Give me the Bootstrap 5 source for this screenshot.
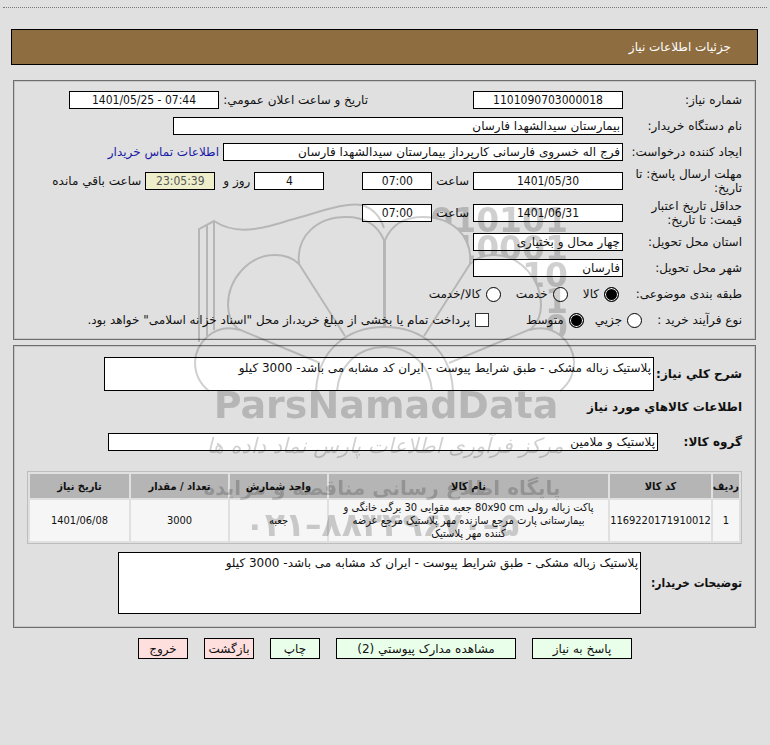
<!DOCTYPE html>
<html lang="fa" dir="rtl">
<head>
<meta charset="utf-8">
<meta name="viewport" content="width=device-width, initial-scale=1">
<title>جزئیات اطلاعات نیاز</title>
<link rel="stylesheet" href="https://cdn.jsdelivr.net/npm/bootstrap@5.3.0/dist/css/bootstrap.min.css">
<style>
body{background:#e0e0e0;color:#111;font:12px/14px "DejaVu Sans",sans-serif}
.top-line{border-top:1px dotted #777;margin:7px 3px 21px}
.page-title{background:#8e6d41;border:1px solid #000;color:#fff;margin:0 12px 15px 11px;height:36px;padding:0 26px}
.panel{border:1px solid #6e6e6e;box-shadow:inset 0 0 0 1px #c6c6c6;margin:0 14px 5px 13px;padding:6px 13px}
.panel-goods{padding:11px 13px 13px}
.line{min-height:26px}
.line-tall{min-height:32px}
.caption-col{flex:0 0 115px}
.caption-wide{flex:0 0 84px;min-width:0;font-weight:700}
.caption-note{flex:0 0 97px;font-weight:700;font-family:"DejaVu Sans Condensed","DejaVu Sans",sans-serif}
.field{display:block;height:18px;border:1px solid #000;border-radius:0;background:#fff;color:#111;padding:0 2px;min-width:0;font-size:12px;line-height:16px;flex:0 1 auto}
.field[dir=ltr]{font-family:"DejaVu Sans Condensed","DejaVu Sans",sans-serif}
.area{height:auto;resize:none;overflow:hidden;padding:3px 2px 1px;line-height:14px}
.w-s{width:70px}.w-m{width:150px}.w-l{width:400px}.w-xl{width:450px}.w-xxl{width:550px}.w-note{width:523px}
.second{width:145px;margin-right:101px}
.days{margin-right:34px}
.left-time{background:#eeeecb;color:#555;margin-right:4px}
.contact{color:#1a1aa6;text-decoration:none}
.pick{appearance:none;width:15px;height:15px;border:1px solid #000;background:#fff;margin:0;flex:none}
.pick[type=radio]{border-radius:50%}
.pick[type=radio]:checked{background:#000;box-shadow:inset 0 0 0 1px #fff}
.pick[type=checkbox]{width:14px;height:14px;border-color:#333}
.choice{gap:5px}
.kinds{gap:15px}
.sizes{gap:11px}
.treasury{margin-right:26px}
.goods-title{font-size:12px;line-height:14px;font-weight:700;margin:9px 0 15px}
.goods{width:100%;table-layout:fixed;border:1px solid #bdbdbd;border-collapse:separate;border-spacing:2px;font:11px/13px "DejaVu Sans Condensed","DejaVu Sans",sans-serif;text-align:center}
.goods th{background:#b5b5b5;height:24px;padding:0;font-weight:700;white-space:nowrap}
.goods td{background:#f6f6f6;height:41px;padding:1px 0}
.goods .item-name{padding:1px 12px}
.col-row{width:26px}.col-code{width:101px}.col-unit{width:97px}.col-qty{width:97px}.col-date{width:99px}
.actions{margin-top:10px}
.act{border:1px solid #000;background:#eaffea;color:#111;height:21px;padding:0;font-size:12px;line-height:18px;white-space:nowrap}
.act-red{background:#ffdede}
.act-s{width:50px}.act-m{width:100px}.act-l{width:180px}
.watermark{position:absolute;top:200px;left:50%;width:400px;height:350px;margin-left:-200px;pointer-events:none;opacity:.18}
</style>
<script src="https://cdn.jsdelivr.net/npm/bootstrap@5.3.0/dist/js/bootstrap.bundle.min.js"></script>
</head>
<body>
<main class="position-relative overflow-hidden">
<div class="top-line"></div>
<header class="page-title d-flex align-items-center">جزئیات اطلاعات نیاز</header>

<form>
<section class="panel">
  <div class="line d-flex align-items-center gap-1">
    <label class="caption-col" for="no">شماره نیاز:</label>
    <input class="field w-m text-center" id="no" dir="ltr" value="1101090703000018" readonly>
    <label class="second text-nowrap" for="pub">تاریخ و ساعت اعلان عمومي:</label>
    <input class="field w-m text-center" id="pub" dir="ltr" value="1401/05/25 - 07:44" readonly>
  </div>
  <div class="line d-flex align-items-center gap-1">
    <label class="caption-col" for="org">نام دستگاه خریدار:</label>
    <input class="field w-xl" id="org" value="بیمارستان سیدالشهدا فارسان" readonly>
  </div>
  <div class="line d-flex align-items-center gap-1">
    <label class="caption-col text-nowrap" for="by">ایجاد کننده درخواست:</label>
    <input class="field w-l" id="by" value="فرج اله خسروی فارسانی کارپرداز بیمارستان سیدالشهدا فارسان" readonly>
    <a class="contact text-nowrap" href="#">اطلاعات تماس خریدار</a>
  </div>
  <div class="line line-tall d-flex align-items-center gap-1">
    <label class="caption-col" for="d1">مهلت ارسال پاسخ: تا تاریخ:</label>
    <input class="field w-m text-center" id="d1" dir="ltr" value="1401/05/30" readonly>
    <label for="t1">ساعت</label>
    <input class="field w-s text-center" id="t1" dir="ltr" value="07:00" readonly>
    <input class="field w-s text-center days" id="days" dir="ltr" value="4" readonly>
    <label class="text-nowrap" for="days">روز و</label>
    <input class="field w-s text-center left-time" id="left" dir="ltr" value="23:05:39" readonly>
    <label class="text-nowrap" for="left">ساعت باقي مانده</label>
  </div>
  <div class="line line-tall d-flex align-items-center gap-1">
    <label class="caption-col" for="d2">حداقل تاریخ اعتبار قیمت: تا تاریخ:</label>
    <input class="field w-m text-center" id="d2" dir="ltr" value="1401/06/31" readonly>
    <label for="t2">ساعت</label>
    <input class="field w-s text-center" id="t2" dir="ltr" value="07:00" readonly>
  </div>
  <div class="line d-flex align-items-center gap-1">
    <label class="caption-col" for="prov">استان محل تحویل:</label>
    <input class="field w-m" id="prov" value="چهار محال و بختیاری" readonly>
  </div>
  <div class="line d-flex align-items-center gap-1">
    <label class="caption-col" for="city">شهر محل تحویل:</label>
    <input class="field w-m" id="city" value="فارسان" readonly>
  </div>
  <div class="line d-flex align-items-center" role="radiogroup">
    <span class="caption-col">طبقه بندی موضوعی:</span>
    <div class="kinds d-flex pe-2">
      <label class="choice d-flex align-items-center"><input class="pick" type="radio" name="kind" checked>کالا</label>
      <label class="choice d-flex align-items-center"><input class="pick" type="radio" name="kind">خدمت</label>
      <label class="choice d-flex align-items-center"><input class="pick" type="radio" name="kind">کالا/خدمت</label>
    </div>
  </div>
  <div class="line d-flex align-items-center sizes" role="radiogroup">
    <span class="text-nowrap ps-1">نوع فرآیند خرید :</span>
    <label class="choice d-flex align-items-center"><input class="pick" type="radio" name="size">جزیي</label>
    <label class="choice d-flex align-items-center"><input class="pick" type="radio" name="size" checked>متوسط</label>
    <label class="choice treasury d-flex align-items-center text-nowrap"><input class="pick" type="checkbox">پرداخت تمام یا بخشی از مبلغ خرید،از محل "اسناد خزانه اسلامی" خواهد بود.</label>
  </div>
</section>

<section class="panel panel-goods">
  <div class="d-flex align-items-center gap-1">
    <label class="caption-wide text-nowrap" for="desc">شرح کلي نیاز:</label>
    <textarea class="field area w-xxl" id="desc" rows="2" readonly>پلاستیک زباله مشکی - طبق شرایط پیوست - ایران کد مشابه می باشد- 3000 کیلو</textarea>
  </div>
  <h2 class="goods-title">اطلاعات کالاهاي مورد نیاز</h2>
  <div class="line d-flex align-items-center">
    <label class="caption-wide" for="grp">گروه کالا:</label>
    <input class="field w-xxl" id="grp" value="پلاستیک و ملامین" readonly>
  </div>
  <table class="goods mt-3 mb-2">
    <colgroup><col class="col-row"><col class="col-code"><col><col class="col-unit"><col class="col-qty"><col class="col-date"></colgroup>
    <thead><tr><th>ردیف</th><th>کد کالا</th><th>نام کالا</th><th>واحد شمارش</th><th>تعداد / مقدار</th><th>تاریخ نیاز</th></tr></thead>
    <tbody><tr><td>1</td><td>1169220171910012</td><td class="item-name">پاکت زباله رولی 80x90 cm جعبه مقوایی 30 برگی خانگی و بیمارستانی پارت مرجع سازنده مهر پلاستیک مرجع عرضه کننده مهر پلاستیک</td><td>جعبه</td><td>3000</td><td>1401/06/08</td></tr></tbody>
  </table>
  <div class="d-flex align-items-center gap-1">
    <label class="caption-note text-nowrap" for="note">توضیحات خریدار:</label>
    <textarea class="field area w-note" id="note" rows="4" readonly>پلاستیک زباله مشکی - طبق شرایط پیوست - ایران کد مشابه می باشد- 3000 کیلو</textarea>
  </div>
</section>

<div class="actions d-flex justify-content-center gap-3">
  <button class="act act-m" type="button">پاسخ به نیاز</button>
  <button class="act act-l" type="button">مشاهده مدارک پیوستي (2)</button>
  <button class="act act-s" type="button">چاپ</button>
  <button class="act act-red act-s" type="button">بازگشت</button>
  <button class="act act-red act-s" type="button">خروج</button>
</div>
</form>

<svg class="watermark" viewBox="185 200 400 350" aria-hidden="true">
  <defs>
    <mask id="behind" maskUnits="userSpaceOnUse" x="185" y="190" width="400" height="220">
      <rect x="185" y="190" width="400" height="220" fill="#fff"/>
      <path fill="#000" d="M384 340V240C392 222 404 217 424 217C452 217 470 235 470 264C480 256 490 255 496 255C522 255 541 280 541 305Q541 320 532 328C560 325 575 350 575 365V400H384Z"/>
    </mask>
    <g id="petals">
      <path d="M345 336L299 264C296 235 318 217 346 217Q374 217 384 240V327"/>
      <path d="M299 264C292 257 282 255 275 255C248 255 228 280 228 305Q228 320 238 329L320 363"/>
      <path d="M240 330C214 322 195 344 195 362Q195 380 209 391"/>
      <path d="M316 391C318 350 347 327 385 327M337 391C339 365 358 347 385 347"/>
    </g>
  </defs>
  <g fill="none" stroke="#000" stroke-width="2">
    <path d="M199 342V229L214 221C235 235 260 230 290 220C320 212 345 202 362 205Q378 210 384 228M207 336V225M214 330V221"/>
    <use href="#petals"/>
    <use href="#petals" transform="translate(769 0) scale(-1 1)"/>
  </g>
  <g mask="url(#behind)" font-family="DejaVu Sans" font-weight="700" font-size="33" text-anchor="end" direction="ltr">
    <text x="568" y="232">010101</text><text x="568" y="260">10001</text><text x="568" y="287">10</text><text x="568" y="313">1</text><text x="568" y="339">0</text>
  </g>
  <g text-anchor="middle" font-family="DejaVu Sans">
    <text x="386" y="418" direction="ltr" font-weight="700" font-size="38">ParsNamadData</text>
    <text x="385" y="453" direction="rtl" font-style="italic" font-size="21">مرکز فرآوری اطلاعات پارس نماد داده ها</text>
    <text x="382" y="495" direction="rtl" font-weight="700" font-size="20">پایگاه اطلاع رسانی مناقصه و مزایده</text>
    <text x="382" y="536" direction="ltr" font-weight="700" font-size="33" unicode-bidi="bidi-override">۰۲۱–۸۸۳۴۹۶۷۰–۵</text>
  </g>
</svg>
</main>
</body>
</html>
